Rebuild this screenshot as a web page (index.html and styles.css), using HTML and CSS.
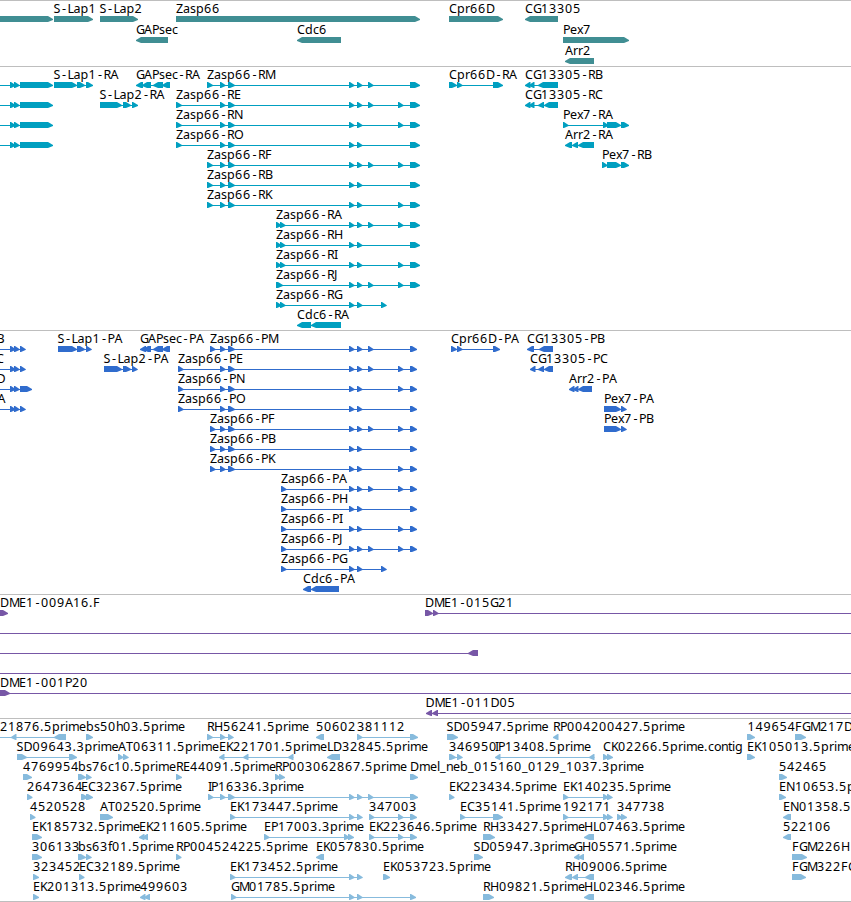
FILE: index.html
```
<!DOCTYPE html>
<html lang="en">
<head>
    <meta charset="UTF-8">
    <meta name="viewport" content="width=device-width, initial-scale=1.0">
    <title>Genome Browser</title>
    <link rel="stylesheet" href="styles.css">
</head>
<body>
    <div class="browser">
        <section class="track genes" id="genes"></section>
        <section class="track transcripts" id="transcripts"></section>
        <section class="track proteins" id="proteins"></section>
        <section class="track clones" id="clones"></section>
        <section class="track ests" id="ests"></section>
    </div>
    <script src="tracks.js"></script>
</body>
</html>
```
FILE: styles.css
```
body {
    margin: 0;
    background-color: #fff;
    font-family: "Noto Sans", sans-serif;
    overflow: hidden;
}

.browser {
    display: flex;
    flex-direction: column;
    border-bottom: 1px solid #bebebe;
}

.track {
    box-sizing: border-box;
    border-top: 1px solid #bebebe;
    overflow: hidden;
}

.track svg {
    display: block;
    width: 100%;
    height: 100%;
}

.track text {
    fill: #000;
    font-size: 12.5px;
}

.genes {
    height: 66px;
    color: #408e93;
}

.transcripts {
    height: 264px;
    color: #009fc0;
}

.proteins {
    height: 264px;
    color: #306ccd;
}

.clones {
    height: 124px;
    color: #7757a6;
}

.ests {
    height: 183px;
    color: #87bbdd;
}

.exon,
.intron {
    fill: currentColor;
}
```
FILE: tracks.js
```
// Each feature: [row, label, label x, strand, exons]
// An exon is "start:end", or just "start" for a short one.
const tracks = {
    genes: { pitch: 21, features: [
        [0, "", 0, "+", "-20:53"],
        [0, "S-Lap1", 53.5, "+", "54:93"],
        [0, "S-Lap2", 99.5, "+", "100:138"],
        [0, "Zasp66", 176, "+", "176:420"],
        [0, "Cpr66D", 449, "+", "449:503"],
        [0, "CG13305", 525, "-", "525:558"],
        [1, "GAPsec", 136, "-", "136:168"],
        [1, "Cdc6", 297, "-", "297:341"],
        [1, "Pex7", 563, "+", "563:629"],
        [2, "Arr2", 565, "-", "565:594"]
    ] },
    transcripts: { pitch: 20, features: [
        [0, "", 0, "+", "-20 10 14 20:53"],
        [1, "", 0, "+", "-20 10 14 20:53"],
        [2, "", 0, "+", "-20 10 14 20:53"],
        [3, "", 0, "+", "-20 10 14 20:53"],
        [0, "S-Lap1-RA", 53.5, "+", "54:77 77:85 86:93"],
        [0, "GAPsec-RA", 136, "-", "136:143 142:151 153:163 162:170"],
        [0, "Zasp66-RM", 207, "+", "207:213 220 228:235 349 357 368 410:420"],
        [0, "Cpr66D-RA", 449, "+", "449:457 457 493:503"],
        [0, "CG13305-RB", 525, "-", "525 529 538:558"],
        [1, "S-Lap2-RA", 99.5, "+", "100:122 123:131 132:138"],
        [1, "Zasp66-RE", 176, "+", "176:182 220 228:235 349 357 368 398 410:420"],
        [1, "CG13305-RC", 525, "-", "525 529 538:544 544:558"],
        [2, "Zasp66-RN", 176, "+", "176:182 220 228:235 349 357 398 410:420"],
        [2, "Pex7-RA", 563, "+", "563 603 607:621 621:629"],
        [3, "Zasp66-RO", 176, "+", "176:182 220 228:235 349 357 410:420"],
        [3, "Arr2-RA", 565, "-", "565:572 572:578 578:594"],
        [4, "Zasp66-RF", 207, "+", "207:213 220 228:235 349 357 368 398 410:420"],
        [4, "Pex7-RB", 602, "+", "602 607:621 621:629"],
        [5, "Zasp66-RB", 207, "+", "207:213 220 228:235 349 357 410:420"],
        [6, "Zasp66-RK", 207, "+", "207:213 220 228:235 349 357 398 410:420"],
        [7, "Zasp66-RA", 276, "+", "276 280 349 357 368 398 410:420"],
        [8, "Zasp66-RH", 276, "+", "276 280 349 357 410:420"],
        [9, "Zasp66-RI", 276, "+", "276 280 349 357 398 410:420"],
        [10, "Zasp66-RJ", 276, "+", "276:283 349 357 368 398 410:420"],
        [11, "Zasp66-RG", 276, "+", "276 280 349 357 381"],
        [12, "Cdc6-RA", 297, "-", "297:311 311:341"]
    ] },
    proteins: { pitch: 20, features: [
        [0, "B", -3.5, "+", "-20 10 14 20"],
        [1, "C", -4, "+", "-20 10 14 20"],
        [2, "D", -3.5, "+", "-20 10 14 20:32"],
        [3, "A", -2.5, "+", "-20 10 14 20"],
        [0, "S-Lap1-PA", 57.5, "+", "58:77 77:85 86"],
        [0, "GAPsec-PA", 140, "-", "140:146 143:151 153:163 162:170"],
        [0, "Zasp66-PM", 210, "+", "210 220 228:235 349 357 368 410:417"],
        [0, "Cpr66D-PA", 451, "+", "451:457 457 493:500"],
        [0, "CG13305-PB", 527, "-", "527:534 539:553"],
        [1, "S-Lap2-PA", 103.5, "+", "104:122 123:131 132"],
        [1, "Zasp66-PE", 178, "+", "178 220 228:235 349 357 368 398 410:417"],
        [1, "CG13305-PC", 530, "-", "530 538:544 544:553"],
        [2, "Zasp66-PN", 178, "+", "178 220 228:235 349 357 398 410:417"],
        [2, "Arr2-PA", 569, "-", "569 573 578:592"],
        [3, "Zasp66-PO", 178, "+", "178 220 228:235 349 357 410:417"],
        [3, "Pex7-PA", 604, "+", "604:621 621"],
        [4, "Zasp66-PF", 210, "+", "210 220 228:235 349 357 368 398 410:417"],
        [4, "Pex7-PB", 604, "+", "604:621 621"],
        [5, "Zasp66-PB", 210, "+", "210 220 228:235 349 357 410:417"],
        [6, "Zasp66-PK", 210, "+", "210 220 228:235 349 357 398 410:417"],
        [7, "Zasp66-PA", 281, "+", "281 349 357 368 398 410:417"],
        [8, "Zasp66-PH", 281, "+", "281 349 357 410:417"],
        [9, "Zasp66-PI", 281, "+", "281 349 357 398 410:417"],
        [10, "Zasp66-PJ", 281, "+", "281 349 357 368 398 410:417"],
        [11, "Zasp66-PG", 281, "+", "281 349 357 381"],
        [12, "Cdc6-PA", 303, "-", "303:311 311:339"]
    ] },
    clones: { pitch: 20, features: [
        [0, "DME1-009A16.F", 0, "+", "-6:8"],
        [0, "DME1-015G21", 425, "+", "425:433 433 900"],
        [1, "", 0, "+", "-20 900"],
        [2, "", 0, "-", "-20 468:478"],
        [3, "", 0, "+", "-20 900"],
        [4, "DME1-001P20", 0, "+", "-6:10 900"],
        [5, "DME1-011D05", 425.5, "-", "426:432 432:438 900"]
    ] },
    ests: { pitch: 20, features: [
        [0, "21876.5prime", 0, "-", "-20 11 54:66"],
        [0, "bs50h03.5prime", 86, "+", "86:93"],
        [0, "RH56241.5prime", 207, "+", "207:213 220 228"],
        [0, "50602", 316, "-", "316:324"],
        [0, "381112", 357, "+", "357 410:418"],
        [0, "SD05947.5prime", 446.5, "+", "447:458"],
        [0, "RP004200427.5prime", 553, "-", "553"],
        [0, "149654", 747.5, "+", "747:755"],
        [0, "FGM217D", 795, "+", "795:806"],
        [1, "SD09643.3prime", 16.5, "+", "17:27 69:77"],
        [1, "AT06311.5prime", 118, "+", "118 123"],
        [1, "EK221701.5prime", 219, "-", "219 243 288"],
        [1, "LD32845.5prime", 327, "-", "327:340"],
        [1, "346950", 449, "+", "449:456 457"],
        [1, "IP13408.5prime", 495, "-", "495 589"],
        [1, "CK02266.5prime.contig", 603, "+", "603 607:613"],
        [1, "EK105013.5prime", 747, "+", "747:755"],
        [2, "4769954", 23, "+", "23:32"],
        [2, "bs76c10.5prime", 78, "+", "78:86 86"],
        [2, "RE44091.5prime", 176, "+", "176:182"],
        [2, "RP003062867.5prime", 275, "+", "275 279:285"],
        [2, "Dmel_neb_015160_0129_1037.3prime", 410, "+", "410:418"],
        [2, "542465", 779, "+", "779:787"],
        [3, "2647364", 27, "+", "27"],
        [3, "EC32367.5prime", 81, "+", "81:88 86:93"],
        [3, "IP16336.3prime", 208, "+", "208 220 228:235 349 357 368 410:418"],
        [3, "EK223434.5prime", 449, "+", "449"],
        [3, "EK140235.5prime", 563, "+", "563 603 607"],
        [3, "EN10653.5prime", 779, "+", "779:786"],
        [4, "4520528", 30, "+", "30"],
        [4, "AT02520.5prime", 100, "+", "100:113"],
        [4, "EK173447.5prime", 230, "+", "230 349 357"],
        [4, "347003", 369, "+", "369 398 410:417"],
        [4, "EC35141.5prime", 460, "+", "460 493:503"],
        [4, "192171", 563, "+", "563 603 607"],
        [4, "347738", 617, "+", "617 621:627"],
        [4, "EN01358.5prime", 783, "-", "783:791"],
        [5, "EK185732.5prime", 32, "+", "32:42"],
        [5, "EK211605.5prime", 139, "-", "139 142:148"],
        [5, "EP17003.3prime", 264, "+", "264 344 348:354"],
        [5, "EK223646.5prime", 369, "+", "369 398 410:417"],
        [5, "RH33427.5prime", 483, "+", "483:495"],
        [5, "HL07463.5prime", 584, "-", "584:594"],
        [5, "522106", 783, "-", "783:791"],
        [6, "306133", 32, "+", "32:42"],
        [6, "bs63f01.5prime", 78, "+", "78:86 86"],
        [6, "RP004524225.5prime", 176, "+", "176"],
        [6, "EK057830.5prime", 316, "-", "316:324"],
        [6, "SD05947.3prime", 473.5, "+", "474:483"],
        [6, "GH05571.5prime", 574, "-", "574 578:584"],
        [6, "FGM226H", 792, "+", "792:807"],
        [7, "323452", 33, "+", "33:39"],
        [7, "EC32189.5prime", 79, "+", "79"],
        [7, "EK173452.5prime", 230, "+", "230 349 357"],
        [7, "EK053723.5prime", 383, "+", "383:390"],
        [7, "RH09006.5prime", 565, "-", "565:572 572:578 585:594"],
        [7, "FGM322FG", 792, "+", "792:806"],
        [8, "EK201313.5prime", 33, "+", "33:39"],
        [8, "499603", 140, "-", "140 144:150"],
        [8, "GM01785.5prime", 231, "+", "231 349 357 410:416"],
        [8, "RH09821.5prime", 483, "+", "483:494"],
        [8, "HL02346.5prime", 584, "-", "584:594"]
    ] }
};

// label advance widths in pixels, digits are 8
const advance = {
    ".": 4, "-": 7, "_": 6,
    A: 8, B: 7, C: 8, D: 9, E: 7, F: 7, G: 8, H: 9, I: 3, J: 4, K: 7, L: 6,
    M: 10, N: 9, O: 9, P: 7, R: 7, S: 7, T: 7, Z: 7,
    a: 7, b: 8, c: 6, d: 8, e: 7, f: 4, g: 7, h: 7, i: 3, l: 3, m: 11, n: 7, o: 7,
    p: 8, r: 5, s: 6, t: 4, x: 6
};

function addShape(svg, name, attrs) {
    const el = document.createElementNS("http://www.w3.org/2000/svg", name);
    for (const key in attrs) {
        el.setAttribute(key, attrs[key]);
    }
    svg.appendChild(el);
    return el;
}

function arrowPoints(start, end, y, strand) {
    const head = Math.min(6, end - start);
    if (strand === "+") {
        const neck = end - head;
        return `${start},${y} ${neck + 1},${y} ${end},${y + 3} ${end},${y + 4} ${neck + 1},${y + 6} ${start},${y + 6}`;
    }
    const neck = start + head;
    return `${end},${y} ${neck - 1},${y} ${start},${y + 3} ${start},${y + 4} ${neck - 1},${y + 6} ${end},${y + 6}`;
}

function drawTrack(id) {
    const svg = addShape(document.getElementById(id), "svg", {});
    for (const [row, label, labelX, strand, spec] of tracks[id].features) {
        const top = row * tracks[id].pitch;
        const exons = spec.split(" ").map(part => {
            const [start, end] = part.split(":").map(Number);
            return [start, end === undefined ? start + 5.5 : end];
        });
        const first = exons[0][0];
        const last = exons[exons.length - 1][1];

        if (exons.length > 1) {
            addShape(svg, "rect", { class: "intron", x: first, y: top + 18, width: last - first, height: 1 });
        }
        for (const [start, end] of exons) {
            addShape(svg, "polygon", { class: "exon", points: arrowPoints(start, end, top + 15, strand) });
        }
        if (label) {
            let x = labelX;
            const xs = [...label].map(ch => {
                // hyphens sit in the middle of their cell
                const at = ch === "-" ? x + 1.5 : x;
                x += advance[ch] || 8;
                return at;
            });
            addShape(svg, "text", { x: xs.join(" "), y: top + 12 }).textContent = label;
        }
    }
}

Object.keys(tracks).forEach(drawTrack);
```
